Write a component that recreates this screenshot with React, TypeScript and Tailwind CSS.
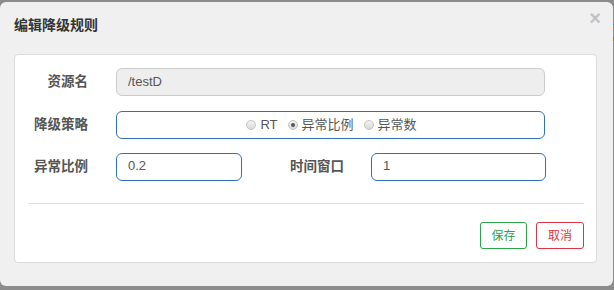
import React from "react";

const font = { fontFamily: '"Liberation Sans", "Noto Sans CJK SC", sans-serif' };

function Radio({ checked, label }: { checked?: boolean; label: string }) {
  return (
    <span className="flex items-center gap-[4px]">
      <span className="relative w-[10px] h-[10px] rounded-full border border-[#c4c4c4] bg-gradient-to-b from-[#f4f4f4] to-[#d8d8d8] flex items-center justify-center">
        {checked && <span className="w-[4px] h-[4px] rounded-full bg-[#555]" />}
      </span>
      <span className="text-[13px] text-[#555] leading-[16px]">{label}</span>
    </span>
  );
}

export default function App() {
  return (
    <div className="w-[614px] h-[290px] bg-[#8c8c8c] flex flex-col overflow-hidden" style={font}>
      <div className="h-[2px] shrink-0" />
      <div className="flex">
        <div className="relative w-[613px] h-[284px] bg-[#f0f0f0] rounded-[6px] flex flex-col">
          <div className="absolute right-[12px] top-[6px] text-[20px] leading-[20px] font-bold text-[#c2c2c2]">×</div>
          <div className="pl-[14px] pt-[13px] h-[52px] text-[14px] leading-[20px] font-bold text-[#333]">编辑降级规则</div>
          <div className="ml-[14px] w-[583px] h-[209px] bg-white border border-[#dcdcdc] rounded-[4px] pt-[13px] flex flex-col">
            <div className="flex items-center h-[28px]">
              <div className="w-[73px] text-right text-[13.5px] font-bold text-[#555]">资源名</div>
              <div className="ml-[28px] w-[429px] h-[28px] bg-[#eeeeee] border border-[#cccccc] rounded-[6px] pl-[11px] flex items-center text-[13px] text-[#555]">/testD</div>
            </div>
            <div className="flex items-center h-[28px] mt-[15px]">
              <div className="w-[73px] text-right text-[13.5px] font-bold text-[#555]">降级策略</div>
              <div className="ml-[28px] w-[429px] h-[28px] border border-[#2f72b8] rounded-[6px] flex items-center justify-center gap-[10px] pl-[2px]">
                <Radio label="RT" />
                <Radio checked label="异常比例" />
                <Radio label="异常数" />
              </div>
            </div>
            <div className="flex items-center h-[28px] mt-[14px]">
              <div className="w-[73px] text-right text-[13.5px] font-bold text-[#555]">异常比例</div>
              <div className="ml-[28px] w-[126px] h-[28px] border border-[#2f72b8] rounded-[6px] pl-[11px] pb-[3px] flex items-center text-[13px] text-[#555]">0.2</div>
              <div className="ml-[47px] w-[55px] text-right text-[13.5px] font-bold text-[#555]">时间窗口</div>
              <div className="ml-[27px] w-[175px] h-[28px] border border-[#2f72b8] rounded-[6px] pl-[11px] pb-[3px] flex items-center text-[13px] text-[#555]">1</div>
            </div>
            <div className="ml-[13px] w-[556px] h-[1px] bg-[#e3e3e3] mt-[22px]" />
            <div className="flex justify-end gap-[9px] mt-[18px] mr-[12px]">
              <div className="w-[47px] h-[27px] border border-[#2aa54a] rounded-[3px] flex items-center justify-center text-[12px] text-[#2aa54a]">保存</div>
              <div className="w-[48px] h-[27px] border border-[#dc3545] rounded-[3px] flex items-center justify-center text-[12px] text-[#dc3545]">取消</div>
            </div>
          </div>
        </div>
        <div className="w-[1px] flex flex-col">
          <div className="h-[22px]" />
          <div className="h-[1px] bg-[#3a78b5]" />
          <div className="h-[12px]" />
          <div className="h-[4px] bg-[#b06a2a]" />
          <div className="h[14px]" />
        </div>
      </div>
    </div>
  );
}
